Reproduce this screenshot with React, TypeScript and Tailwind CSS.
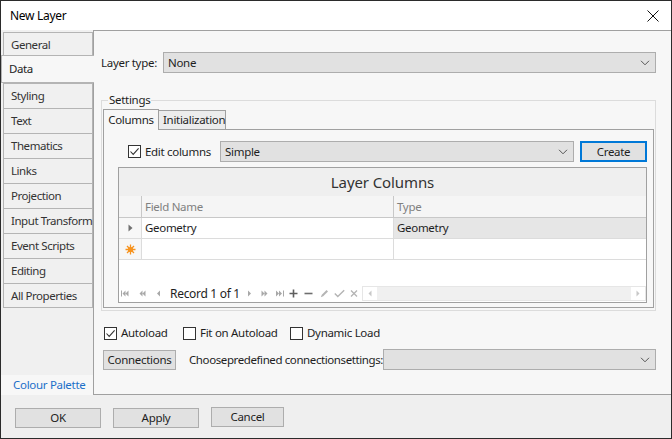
import React from "react";

const TABS = [
  "General",
  "Data",
  "Styling",
  "Text",
  "Thematics",
  "Links",
  "Projection",
  "Input Transform",
  "Event Scripts",
  "Editing",
  "All Properties",
];

function Check({ checked }: { checked?: boolean }) {
  return (
    <span className="flex h-[13px] w-[13px] shrink-0 items-center justify-center border border-[#333] bg-white">
      {checked && (
        <svg width="11" height="11" viewBox="0 0 11 11">
          <path d="M1.5 5.5 L4.2 8.4 L9.6 2.4" fill="none" stroke="#333" strokeWidth="1.1" />
        </svg>
      )}
    </span>
  );
}

function Chevron() {
  return (
    <svg width="10" height="6" viewBox="0 0 10 6">
      <path d="M1 0.8 L5 4.8 L9 0.8" fill="none" stroke="#555" strokeWidth="1" />
    </svg>
  );
}

function Combo({ value, className }: { value?: string; className?: string }) {
  return (
    <div
      className={
        "flex h-[21px] items-center justify-between border border-[#adadad] bg-[#e1e1e1] pl-[4px] pr-[5px] " +
        (className ?? "")
      }
    >
      <span>{value}</span>
      <Chevron />
    </div>
  );
}

function Btn({ label, className }: { label: string; className?: string }) {
  return (
    <div
      className={
        "flex h-[20px] items-center justify-center border border-[#adadad] bg-[#e1e1e1] " + (className ?? "")
      }
    >
      {label}
    </div>
  );
}

function Slot({ w, children }: { w: string; children: React.ReactNode }) {
  return <div className={"flex shrink-0 items-center justify-center " + w}>{children}</div>;
}

function Tri({ d, w = 9, fill = "#a8a8a8" }: { d: string; w?: number; fill?: string }) {
  return (
    <svg width={w} height="9" viewBox={`0 0 ${w} 9`}>
      <path d={d} fill={fill} />
    </svg>
  );
}

function Navigator() {
  return (
    <div className="flex h-[15px] items-center">
      <Slot w="w-[11px]">
        <Tri d="M0 1.5h1v6H0z M1.5 4.5 L4.5 1.5v6z M4.5 4.5 L7.5 1.5v6z" w={8} />
      </Slot>
      <Slot w="w-[24px]">
        <Tri d="M0.5 4.5 L3.5 1.5v6z M3.5 4.5 L6.5 1.5v6z" w={7} />
      </Slot>
      <Slot w="w-[9px]">
        <Tri d="M1 4.5 L4 1.5v6z" w={5} />
      </Slot>
      <div className="w-[80px] shrink-0 pl-[7px] text-[12px] tracking-[-0.3px] text-[#1e1e1e]">Record 1 of 1</div>
      <Slot w="w-[12px]">
        <Tri d="M1 1.5 L4 4.5 L1 7.5z" w={5} />
      </Slot>
      <Slot w="w-[18px]">
        <Tri d="M0.5 1.5 L3.5 4.5 L0.5 7.5z M3.5 1.5 L6.5 4.5 L3.5 7.5z" w={7} />
      </Slot>
      <Slot w="w-[14px]">
        <Tri d="M0 1.5 L3 4.5 L0 7.5z M3 1.5 L6 4.5 L3 7.5z M7 1.5h1v6H7z" w={8} />
      </Slot>
      <Slot w="w-[13px]">
        <svg width="9" height="9" viewBox="0 0 9 9">
          <path d="M4.5 0.5v8 M0.5 4.5h8" stroke="#5e5e5e" strokeWidth="1.6" />
        </svg>
      </Slot>
      <Slot w="w-[17px]">
        <svg width="9" height="9" viewBox="0 0 9 9">
          <path d="M0.5 4.5h8" stroke="#6e6e6e" strokeWidth="1.6" />
        </svg>
      </Slot>
      <Slot w="w-[15px]">
        <svg width="9" height="9" viewBox="0 0 9 9">
          <path d="M0.8 8.2 L1.8 5.8 L6.6 1 L8 2.4 L3.2 7.2z" fill="#b4b4b4" />
        </svg>
      </Slot>
      <Slot w="w-[14px]">
        <svg width="11" height="9" viewBox="0 0 11 9">
          <path d="M0.8 4.6 L3.8 7.6 L10.2 1.2" fill="none" stroke="#b4b4b4" strokeWidth="1.4" />
        </svg>
      </Slot>
      <Slot w="w-[16px]">
        <svg width="8" height="9" viewBox="0 0 8 9">
          <path d="M1 1.5 L7 7.5 M7 1.5 L1 7.5" stroke="#b4b4b4" strokeWidth="1.3" />
        </svg>
      </Slot>
      <div className="flex h-[15px] flex-1 items-center border border-[#e6e6e6] bg-[#f0f0f0]">
        <div className="flex h-[13px] w-[14px] items-center justify-center bg-white">
          <svg width="4" height="7" viewBox="0 0 4 7">
            <path d="M3.5 0.5 L0.5 3.5 L3.5 6.5z" fill="#c8c8c8" />
          </svg>
        </div>
        <div className="flex-1" />
        <div className="flex h-[13px] w-[14px] items-center justify-center bg-white">
          <svg width="4" height="7" viewBox="0 0 4 7">
            <path d="M0.5 0.5 L3.5 3.5 L0.5 6.5z" fill="#c8c8c8" />
          </svg>
        </div>
      </div>
    </div>
  );
}

function Grid() {
  return (
    <div className="mt-[5px] flex h-[136px] flex-col border border-[#a0a0a0] bg-white">
      <div className="flex h-[28px] items-center justify-center bg-[#efefef] text-[15px] tracking-[-0.1px] text-[#333]">
        Layer Columns
      </div>
      <div className="flex h-[22px] border-b border-[#c8c8c8] bg-[#f5f5f5] text-[#808080]">
        <div className="w-[23px] border-r border-[#c8c8c8]" />
        <div className="flex w-[252px] items-center border-r border-[#c8c8c8] pl-[3px]">Field Name</div>
        <div className="flex flex-1 items-center pl-[3px]">Type</div>
      </div>
      <div className="flex h-[21px] border-b border-[#dcdcdc]">
        <div className="flex w-[23px] items-center justify-center border-r border-[#dcdcdc] bg-[#f7f7f7]">
          <svg width="5" height="8" viewBox="0 0 5 8">
            <path d="M0.5 0.5 L4.5 4 L0.5 7.5z" fill="#707070" />
          </svg>
        </div>
        <div className="flex w-[252px] items-center border-r border-[#dcdcdc] pl-[3px]">Geometry</div>
        <div className="flex flex-1 items-center bg-[#e6e6e6] pl-[3px]">Geometry</div>
      </div>
      <div className="flex h-[21px] border-b border-[#dcdcdc]">
        <div className="flex w-[23px] items-center justify-center border-r border-[#dcdcdc] bg-[#f7f7f7]">
          <svg width="11" height="11" viewBox="0 0 11 11">
            <g stroke="#f7931e" strokeWidth="1.3">
              <path d="M5.5 0.5v10 M0.5 5.5h10 M2 2l7 7 M9 2l-7 7" />
            </g>
            <circle cx="5.5" cy="5.5" r="2.6" fill="#f7931e" />
          </svg>
        </div>
        <div className="w-[252px] border-r border-[#dcdcdc]" />
        <div className="flex-1" />
      </div>
      <div className="flex-1" />
      <Navigator />
      <div className="h-[1px]" />
    </div>
  );
}

export default function App() {
  return (
    <div className="flex h-[439px] w-[672px] flex-col border border-[#2b2b2b] bg-white font-['Segoe_UI','Noto_Sans',sans-serif] text-[11.5px] tracking-[-0.3px] whitespace-nowrap text-[#1e1e1e]">
      <div className="flex h-[29px] shrink-0 items-center justify-between bg-white pl-[9px] pr-[12px]">
        <span className="text-[12px] text-[#000]">New Layer</span>
        <svg width="12" height="12" viewBox="0 0 12 12">
          <path d="M0.5 0.5 L11.5 11.5 M11.5 0.5 L0.5 11.5" stroke="#111" strokeWidth="1" />
        </svg>
      </div>

      <div className="flex h-[365px] shrink-0 bg-[#f0f0f0]">
        <div className="flex w-[92px] shrink-0 flex-col">
          <div className="flex flex-col pl-[2px] pt-[2px] tracking-[-0.45px]">
            {TABS.map((tab, i) =>
              tab === "Data" ? (
                <div
                  key={tab}
                  className="relative z-10 -ml-[2px] -mt-[2px] flex h-[28px] w-[93px] items-center border-y border-l border-[#b4b4b4] bg-[#f7f7f7] pl-[7px] text-[#1e1e1e]"
                >
                  {tab}
                </div>
              ) : (
                <div
                  key={tab}
                  className={
                    "flex h-[25px] w-[90px] items-center border-x border-t border-[#b4b4b4] bg-[#f0f0f0] pl-[7px] text-[#333] " +
                    (i === TABS.length - 1 ? "border-b" : "")
                  }
                >
                  {tab}
                </div>
              )
            )}
          </div>
          <div className="flex-1" />
          <div className="flex h-[20px] items-center bg-[#f7f7f7] pl-[12px] text-[#1c6fc9]">Colour Palette</div>
        </div>

        <div className="flex flex-1 flex-col border-b border-l border-t border-[#a0a0a0] bg-[#f7f7f7] pl-[7px] pr-[15px]">
          <div className="mt-[21px] flex items-center">
            <span className="w-[62px]">Layer type:</span>
            <Combo value="None" className="flex-1" />
          </div>

          <fieldset className="mt-[20px] border border-[#dcdcdc] px-[1px] pb-[2px]">
            <legend className="ml-[5px] px-[1px] leading-[14px]">Settings</legend>
            <div className="mt-[2px] flex items-end">
              <div className="relative z-10 -mb-px flex h-[21px] w-[56px] items-center justify-center border-x border-t border-[#a0a0a0] bg-[#f7f7f7]">
                Columns
              </div>
              <div className="flex h-[19px] w-[67px] items-center border-r border-t border-[#a0a0a0] bg-[#ececec] pl-[4px]">
                Initialization
              </div>
            </div>
            <div className="flex flex-col border border-[#a0a0a0] pb-[4px] pl-[14px] pr-[6px] pt-[11px]">
              <div className="flex items-center">
                <div className="ml-[10px] flex w-[92px] items-center gap-[4px]">
                  <Check checked />
                  <span>Edit columns</span>
                </div>
                <Combo value="Simple" className="h-[21px] w-[354px]" />
                <div className="ml-[6px] flex h-[21px] flex-1 items-center justify-center border-2 border-[#0078d7] bg-[#e1e1e1]">
                  Create
                </div>
              </div>
              <Grid />
            </div>
          </fieldset>

          <div className="mt-[14px] flex h-[16px] items-center pl-[3px]">
            <Check checked />
            <span className="ml-[4px] w-[62px]">Autoload</span>
            <Check />
            <span className="ml-[4px] w-[90px]">Fit on Autoload</span>
            <Check />
            <span className="ml-[4px]">Dynamic Load</span>
          </div>

          <div className="mt-[8px] flex items-center pl-[2px]">
            <Btn label="Connections" className="w-[73px]" />
            <span className="ml-[13px] shrink-0 tracking-[-0.4px]">Choosepredefined connectionsettings:</span>
            <Combo className="min-w-0 flex-1" />
          </div>
        </div>
      </div>

      <div className="flex flex-1 items-start gap-[12px] bg-[#efefef] pl-[14px] pt-[13px]">
        <Btn label="OK" className="w-[86px]" />
        <Btn label="Apply" className="w-[86px]" />
        <Btn label="Cancel" className="-mt-[1px] w-[73px]" />
      </div>
    </div>
  );
}
